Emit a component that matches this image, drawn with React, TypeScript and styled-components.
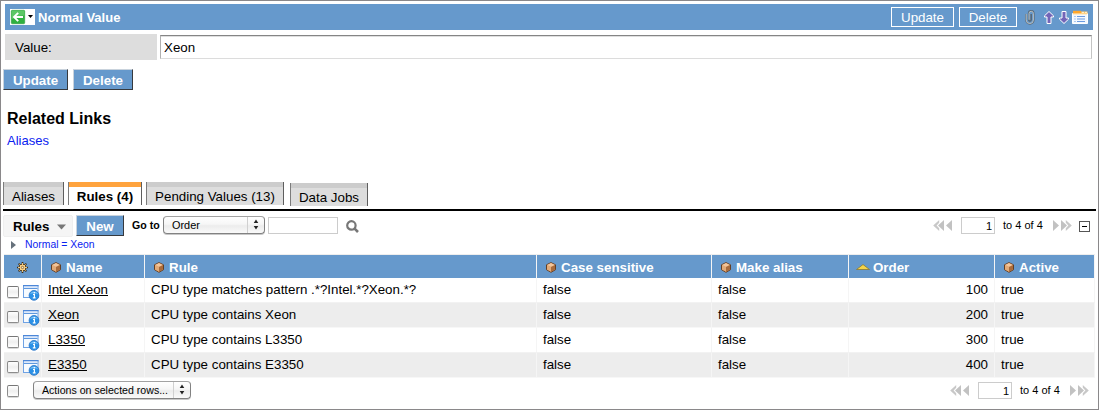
import React from 'react';
import styled, { createGlobalStyle, css } from 'styled-components';

const Global = createGlobalStyle`
  * { box-sizing: border-box; }
  body { margin: 0; background: #fff; }
  body, button, input { font-family: "Liberation Sans", Arial, Helvetica, sans-serif; }
  svg { display: block; flex: none; }
`;

const Frame = styled.main`
  width: 1099px;
  height: 410px;
  border: 1px solid #8a888a;
  padding: 3px 3px 0 2px;
  display: flex;
  flex-direction: column;
  color: #000;
  font-size: 13.33px;
  line-height: 15px;
  overflow: hidden;
`;

const TitleBar = styled.header`
  height: 26px;
  margin: 0 2px;
  padding: 0 5px;
  background: #6699cc;
  display: flex;
  align-items: center;
  flex: none;
`;

const BackButton = styled.span`
  width: 25px;
  height: 16px;
  background: #fff;
`;

const Title = styled.h1`
  margin: 0 auto 0 3px;
  padding-top: 1px;
  font-size: 13px;
  line-height: 15px;
  color: #fff;
`;

const OutlineButton = styled.button<{ $w: number }>`
  width: ${p => p.$w}px;
  height: 20px;
  margin-right: 5px;
  padding: 1px 0 0;
  border: 1px solid #fff;
  background: #6699cc;
  color: #fff;
  font-size: 13.33px;
  line-height: 17px;
`;

const TitleIcons = styled.div`
  display: flex;
  align-items: center;
  margin-left: 3px;
`;

const ArrowPair = styled.div`
  display: flex;
  gap: 5px;
  margin: 0 3px 0 9px;
`;

const FieldRow = styled.div`
  display: flex;
  align-items: center;
  height: 26px;
  margin: 4px 3px 0 2px;
  flex: none;
`;

const FieldLabel = styled.label`
  width: 152px;
  height: 26px;
  margin-right: 3px;
  padding: 1px 0 0 10px;
  line-height: 26px;
  background: #dddddd;
`;

const FieldInput = styled.input`
  flex: 1;
  height: 24px;
  margin: 0;
  padding: 0 4px 0 3px;
  font-size: 13.33px;
  border: 1px solid;
  border-color: #858585 #c4c4c4 #dcdcdc #b0b0b0;
  box-shadow: inset 0 1px 0 #dfdfdf;
  outline: 0;
`;

const Actions = styled.div`
  display: flex;
  gap: 5px;
  margin-top: 9px;
  flex: none;
`;

const SolidButton = styled.button<{ $w: number }>`
  width: ${p => p.$w}px;
  height: 21px;
  padding: 2px 0 0;
  border: 1px solid;
  border-color: #c9d3dd #36393d #36393d #c9d3dd;
  background: #6699cc;
  color: #fff;
  font-size: 13.33px;
  font-weight: bold;
  line-height: 17px;
`;

const RelatedTitle = styled.h2`
  margin: 20px 0 0 4px;
  font-size: 16px;
  line-height: 18px;
  flex: none;
`;

const RelatedLink = styled.a`
  margin: 5px 0 0 4px;
  font-size: 13px;
  color: #0a22f0;
  align-self: flex-start;
`;

const Tabs = styled.nav`
  display: flex;
  align-items: flex-start;
  height: 29px;
  margin-top: 34px;
  border-bottom: 2px solid #000;
  margin-right: -1px;
  flex: none;
`;

const Tab = styled.div<{ $w: number; $gap: number; $active?: boolean; $drop?: boolean }>`
  width: ${p => p.$w}px;
  height: 23px;
  margin-right: ${p => p.$gap}px;
  margin-top: ${p => (p.$drop ? 1 : 0)}px;
  border-left: 1px solid #7c7c7c;
  border-right: 1px solid #5e5e5e;
  box-shadow: inset 0 5px 0 ${p => (p.$active ? '#ffa33d' : '#cccccc')};
  background: ${p => (p.$active ? '#fff' : '#dddddd')};
  font-weight: ${p => (p.$active ? 'bold' : 'normal')};
  text-align: center;
  padding-top: 7px;
  white-space: nowrap;
`;

const Toolbar = styled.div`
  display: flex;
  align-items: flex-start;
  height: 27px;
  padding-top: 4px;
  flex: none;
`;

const ListMenu = styled.div`
  width: 70px;
  height: 22px;
  margin-right: 3px;
  padding: 1px 6px 0 9px;
  display: flex;
  align-items: center;
  justify-content: space-between;
  background: #f5f5f5;
  border: 1px solid #efefef;
  border-radius: 2px;
  font-size: 13.33px;
  font-weight: bold;
`;

const GoTo = styled.span`
  width: 31px;
  margin-left: 8px;
  font-size: 10.6px;
  font-weight: bold;
  line-height: 21px;
  white-space: nowrap;
`;

const Select = styled.div<{ $w: number }>`
  width: ${p => p.$w}px;
  height: 18px;
  display: flex;
  align-items: center;
  justify-content: space-between;
  padding-left: 8px;
  margin-top: 1px;
  border: 1px solid #828282;
  border-top-color: #a2a2a2;
  border-radius: 4px;
  background: linear-gradient(#fff, #f6f6f6 45%, #ececec 55%, #fafafa);
  box-shadow: 0 1px 0 #c8c8c8;
  font-size: 10.9px;
  line-height: 16px;
  white-space: nowrap;
`;

const FooterSelect = styled(Select)`
  margin-top: -2px;
  font-size: 10.6px;
`;

const Stepper = styled.span`
  height: 16px;
  width: 17px;
  border-left: 1px solid #d0d0d0;
  padding: 2px 0 0 5px;
`;

const SmallInput = styled.input<{ $w: number }>`
  width: ${p => p.$w}px;
  height: 17px;
  margin: 0;
  padding: 0 2px;
  border: 1px solid #cccccc;
  font-size: 11px;
  text-align: right;
  outline: 0;
`;

const SearchInput = styled(SmallInput)`
  margin: 2px 0 0 3px;
`;

const SearchSlot = styled.span`
  margin: 5px 0 0 8px;
`;

const PagerBox = styled.div<{ $bottom?: boolean }>`
  display: flex;
  align-items: center;
  height: 19px;
  margin-left: auto;
  margin-right: ${p => (p.$bottom ? 6 : 5)}px;
  margin-top: ${p => (p.$bottom ? -1 : 1)}px;
  font-size: 11px;
`;

const PageInput = styled(SmallInput)`
  margin-left: 8px;
`;

const PagerText = styled.span`
  width: 41px;
  margin: 0 8px;
  white-space: nowrap;
`;

const Collapse = styled.span`
  width: 11px;
  height: 11px;
  margin: 1px 0 0 7px;
  border: 1px solid #555;
  display: grid;
  place-items: center;
  &::before { content: ''; width: 5px; height: 1px; background: #000; }
`;

const Crumb = styled.div`
  display: flex;
  align-items: center;
  height: 14px;
  padding-left: 8px;
  gap: 9px;
  font-size: 10.4px;
  line-height: 14px;
  color: #0a22f0;
  flex: none;
`;

const Grid = styled.div`
  width: 1091px;
  margin: 2px 0 0 1px;
  border-top: 1px solid #eeeeee;
  flex: none;
`;

const rowBase = css`
  display: grid;
  grid-template-columns: 38px 103px 392px 175px 137px 146px 100px;
`;

const HeadRow = styled.div`
  ${rowBase}
  height: 23px;
  background: #6699cc;
  color: #fff;
  font-weight: bold;
`;

const HeadCell = styled.div<{ $icon?: boolean; $sort?: boolean }>`
  display: flex;
  align-items: center;
  padding-top: 1px;
  padding-left: ${p => (p.$icon ? 13 : p.$sort ? 7 : 9)}px;
  gap: ${p => (p.$sort ? 3 : 5)}px;
  border-right: 1px solid #f5f5f5;
  white-space: nowrap;
`;

const Row = styled.div<{ $alt: boolean }>`
  ${rowBase}
  height: 25px;
  background: ${p => (p.$alt ? '#ededed' : '#fff')};
  border-bottom: 1px solid ${p => (p.$alt ? '#f7f7f7' : '#f2f2f2')};
`;

const Cell = styled.div<{ $right?: boolean }>`
  padding: 4px 6px 0;
  border-right: 1px solid #f5f5f5;
  text-align: ${p => (p.$right ? 'right' : 'left')};
  white-space: nowrap;
`;

const ToolCell = styled.div`
  display: flex;
  gap: 4px;
  padding: 7px 0 0 3px;
  border-right: 1px solid #f5f5f5;
`;

const NameLink = styled.a`
  color: #000;
  display: inline-block;
  height: 14px;
  border-bottom: 1px solid #000;
`;

const Check = styled.span<{ $drop?: boolean }>`
  width: 12px;
  height: 12px;
  margin-top: ${p => (p.$drop ? 1 : 0)}px;
  border: 1px solid #8c8c8c;
  border-top-color: #777;
  border-radius: 2px;
  background: linear-gradient(#fff, #efefef 50%, #fff);
  box-shadow: 0 1px 0 #d8d8d8;
  flex: none;
`;

const Footer = styled.div`
  display: flex;
  align-items: center;
  height: 22px;
  margin-top: 2px;
  padding-left: 4px;
  gap: 14px;
  flex: none;
`;

const Cube = () => (
  <svg width="10" height="11" viewBox="0 0 10 11">
    <path d="M5 .6 9.5 2.8v4.9L5 10.3.5 7.7V2.8z" fill="#d99b66" stroke="#5c3518" strokeWidth=".9" />
    <path d="M5 1.1 9 3 5 5 1 3z" fill="#f3c59a" />
    <path d="M5 5 9 3v4.5L5 9.8z" fill="#a96b3b" />
    <path d="M1 3l4 2v4.8L1 7.5z" fill="#e3ab78" />
  </svg>
);

const Gear = () => (
  <svg width="11" height="11" viewBox="0 0 11 11">
    <path d="M5.5 0v11M0 5.5h11M1.6 1.6l7.8 7.8M9.4 1.6 1.6 9.4" stroke="#3d2c14" strokeWidth="1.6" />
    <circle cx="5.5" cy="5.5" r="3.7" fill="#5a411d" />
    <path d="M5.5 1v9M1 5.5h9M2.3 2.3l6.4 6.4M8.7 2.3 2.3 8.7" stroke="#ffd68a" strokeWidth=".9" />
    <circle cx="5.5" cy="5.5" r="2.7" fill="#ffd68a" />
    <circle cx="5.5" cy="5.5" r="1.2" fill="#f5ead0" stroke="#7a5522" strokeWidth=".8" />
  </svg>
);

const RecordIcon = () => (
  <svg width="17" height="16" viewBox="0 0 17 16">
    <rect x=".5" y=".5" width="14.5" height="12" fill="#f7fbff" stroke="#6fa2e4" />
    <path d="M0 0h15.5v1.4H0z" fill="#4c87d8" />
    <path d="M1 1.4h13.5v1.2H1z" fill="#c9def8" />
    <path d="M1 3.5h13.5" stroke="#5f98dd" />
    <circle cx="11" cy="10.4" r="4.9" fill="#2a90e6" stroke="#2a74c4" strokeWidth=".8" />
    <path d="M7 9.3a4.2 4.2 0 0 1 8 0c-2-1.4-6-1.4-8 0z" fill="#79c0f6" />
    <path d="M10 9.5h1.4v3.2M9.8 12.9h2.8M11.3 7v1.4" stroke="#fff" strokeWidth="1.2" fill="none" />
  </svg>
);

const BackIcon = () => (
  <svg width="25" height="16" viewBox="0 0 25 16">
    <rect x="1.3" y="1.3" width="13.4" height="13.4" rx="1" fill="#2fb03f" stroke="#2a9a3d" strokeWidth=".6" />
    <path d="M1.6 1.6h12.8v5c-5-.6-9 1-12.8 4z" fill="#5cc765" />
    <path d="M13 8H4M8.2 3.8 4 8l4.2 4.2" stroke="#fff" strokeWidth="1.9" fill="none" />
    <path d="M18 6h5l-2.5 3z" fill="#000" />
  </svg>
);

const Clip = () => (
  <svg width="10" height="15" viewBox="0 0 10 15">
    <path d="M1 4v6a3.8 3.8 0 0 0 7.8 0V3.5a2.6 2.6 0 0 0-5.2 0v6.3a1.3 1.3 0 0 0 2.6 0V4" fill="none" stroke="#566879" strokeWidth="1.6" />
    <path d="M1.2 4v6a3.6 3.6 0 0 0 7.2 0V3.5a2.2 2.2 0 0 0-4.4 0v6.3" fill="none" stroke="#c3cacc" strokeWidth=".9" />
  </svg>
);

const Arrow = ({ down = false }: { down?: boolean }) => (
  <svg width="10" height="13" viewBox="0 0 10 13">
    <path
      d={down ? 'M3 .5h4V7h2.5v1.2L5 12.5.5 8.2V7H3z' : 'M3 12.5h4V6h2.5V4.8L5 .5.5 4.8V6H3z'}
      fill="#7265b8"
      stroke="#fff"
    />
  </svg>
);

const FormIcon = () => (
  <svg width="16" height="14" viewBox="0 0 16 14">
    <path d="M.5 3.5h15v10H.5z" fill="#f2f8ff" stroke="#fff" />
    <path d="M1 .8h8v3H1z" fill="#ffa62b" />
    <path d="M9 1.5h6.5V4H9z" fill="#ffc66a" />
    <path d="M10 2.4h2M13 2.4h2" stroke="#fff2d0" />
    <path d="M1 4h14" stroke="#ffe1a8" />
    <path d="M2.5 6.5h1M2.5 9h1M2.5 11.5h1M5 6.5h8M5 9h8M5 11.5h8" stroke="#6b9be0" />
  </svg>
);

const Steps = () => (
  <svg width="6" height="11" viewBox="0 0 6 11">
    <path d="M3 .5 5.3 4H.7zM3 10.5.7 7h4.6z" fill="#222" />
  </svg>
);

const Search = () => (
  <svg width="13" height="13" viewBox="0 0 13 13">
    <circle cx="5.4" cy="5.4" r="4.2" fill="none" stroke="#777" strokeWidth="2.2" />
    <path d="m8.3 8.3 3.7 3.7" stroke="#777" strokeWidth="2.6" />
  </svg>
);

const Skip = ({ next = false }: { next?: boolean }) => (
  <svg width="20" height="11" viewBox="0 0 20 11">
    <g transform={next ? 'matrix(-1 0 0 1 20 0)' : undefined}>
      <path d="M6.2 0v2.8L3.6 5.5l2.6 2.7V11L.2 5.5z" fill="#c8c8c8" />
      <path d="M11 0v11L5 5.5zM19 0v11l-6-5.5z" fill="#c2c2c2" />
    </g>
  </svg>
);

const Pager = ({ bottom = false }: { bottom?: boolean }) => (
  <PagerBox $bottom={bottom}>
    <Skip />
    <PageInput $w={34} defaultValue="1" />
    <PagerText>to 4 of 4</PagerText>
    <Skip next />
    {!bottom && <Collapse />}
  </PagerBox>
);

const rows = [
  ['Intel Xeon', 'CPU type matches pattern .*?Intel.*?Xeon.*?', '100'],
  ['Xeon', 'CPU type contains Xeon', '200'],
  ['L3350', 'CPU type contains L3350', '300'],
  ['E3350', 'CPU type contains E3350', '400'],
];

export default function App() {
  return (
    <>
      <Global />
      <Frame>
        <TitleBar>
          <BackButton><BackIcon /></BackButton>
          <Title>Normal Value</Title>
          <OutlineButton $w={63}>Update</OutlineButton>
          <OutlineButton $w={58}>Delete</OutlineButton>
          <TitleIcons>
            <Clip />
            <ArrowPair>
              <Arrow />
              <Arrow down />
            </ArrowPair>
            <FormIcon />
          </TitleIcons>
        </TitleBar>
        <FieldRow>
          <FieldLabel>Value:</FieldLabel>
          <FieldInput defaultValue="Xeon" />
        </FieldRow>
        <Actions>
          <SolidButton $w={65}>Update</SolidButton>
          <SolidButton $w={60}>Delete</SolidButton>
        </Actions>
        <RelatedTitle>Related Links</RelatedTitle>
        <RelatedLink>Aliases</RelatedLink>
        <Tabs>
          <Tab $w={61} $gap={4}>Aliases</Tab>
          <Tab $w={74} $gap={4} $active>Rules (4)</Tab>
          <Tab $w={138} $gap={6}>Pending Values (13)</Tab>
          <Tab $w={78} $gap={0} $drop>Data Jobs</Tab>
        </Tabs>
        <Toolbar>
          <ListMenu>
            Rules
            <svg width="9" height="6" viewBox="0 0 9 6"><path d="M0 .5h9L4.5 5.5z" fill="#777" /></svg>
          </ListMenu>
          <SolidButton $w={48}>New</SolidButton>
          <GoTo>Go to</GoTo>
          <Select $w={102}>Order<Stepper><Steps /></Stepper></Select>
          <SearchInput $w={70} />
          <SearchSlot><Search /></SearchSlot>
          <Pager />
        </Toolbar>
        <Crumb>
          <svg width="5" height="8" viewBox="0 0 5 8"><path d="M0 0l5 4-5 4z" fill="#66717b" /></svg>
          Normal = Xeon
        </Crumb>
        <Grid>
          <HeadRow>
            <HeadCell $icon><Gear /></HeadCell>
            <HeadCell><Cube />Name</HeadCell>
            <HeadCell><Cube />Rule</HeadCell>
            <HeadCell><Cube />Case sensitive</HeadCell>
            <HeadCell><Cube />Make alias</HeadCell>
            <HeadCell $sort>
              <svg width="14" height="7" viewBox="0 0 14 7">
                <path d="M7 .5 13.5 5.5H.5z" fill="#f6d54a" stroke="#8c7a32" strokeWidth=".8" />
              </svg>
              Order
            </HeadCell>
            <HeadCell><Cube />Active</HeadCell>
          </HeadRow>
          {rows.map(([name, rule, order], i) => (
            <Row key={name} $alt={i % 2 === 1}>
              <ToolCell><Check $drop /><RecordIcon /></ToolCell>
              <Cell><NameLink>{name}</NameLink></Cell>
              <Cell>{rule}</Cell>
              <Cell>false</Cell>
              <Cell>false</Cell>
              <Cell $right>{order}</Cell>
              <Cell>true</Cell>
            </Row>
          ))}
        </Grid>
        <Footer>
          <Check />
          <FooterSelect $w={158}>Actions on selected rows...<Stepper><Steps /></Stepper></FooterSelect>
          <Pager bottom />
        </Footer>
      </Frame>
    </>
  );
}
